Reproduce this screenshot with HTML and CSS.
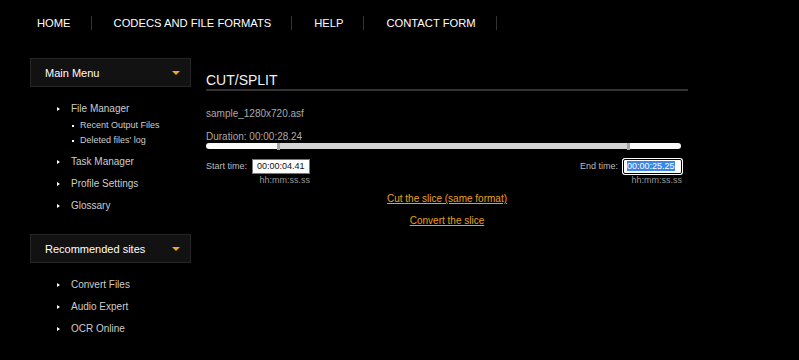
FILE: index.html
```html
<!DOCTYPE html>
<html lang="en">
<head>
    <meta charset="UTF-8">
    <meta name="viewport" content="width=device-width, initial-scale=1.0">
    <title>Cut/Split</title>
    <link rel="stylesheet" href="styles.css">
</head>
<body>
    <nav class="topnav">
        <ul>
            <li><a href="#">HOME</a></li>
            <li><a href="#">CODECS AND FILE FORMATS</a></li>
            <li><a href="#">HELP</a></li>
            <li><a href="#">CONTACT FORM</a></li>
        </ul>
    </nav>

    <div class="page">
        <aside class="sidebar">
            <div class="panel">
                <span>Main Menu</span>
                <span class="caret"></span>
            </div>
            <ul class="menu">
                <li>
                    <a class="item" href="#">File Manager</a>
                    <ul class="sub">
                        <li><a href="#">Recent Output Files</a></li>
                        <li><a href="#">Deleted files' log</a></li>
                    </ul>
                </li>
                <li><a class="item" href="#">Task Manager</a></li>
                <li><a class="item" href="#">Profile Settings</a></li>
                <li><a class="item" href="#">Glossary</a></li>
            </ul>

            <div class="panel">
                <span>Recommended sites</span>
                <span class="caret"></span>
            </div>
            <ul class="menu">
                <li><a class="item" href="#">Convert Files</a></li>
                <li><a class="item" href="#">Audio Expert</a></li>
                <li><a class="item" href="#">OCR Online</a></li>
            </ul>
        </aside>

        <main class="main">
            <h1>CUT/SPLIT</h1>
            <div class="filename">sample_1280x720.asf</div>
            <div class="duration">Duration: 00:00:28.24</div>

            <div class="slider">
                <div class="seg out" style="width: 71px"></div>
                <div class="handle"></div>
                <div class="seg in"></div>
                <div class="handle"></div>
                <div class="seg out" style="width: 51px"></div>
            </div>

            <div class="times">
                <div class="time-group">
                    <label>Start time:</label>
                    <div class="time-field">
                        <div class="time-box">00:00:04.41</div>
                        <div class="hint">hh:mm:ss.ss</div>
                    </div>
                </div>
                <div class="time-group">
                    <label>End time:</label>
                    <div class="time-field">
                        <div class="time-box focus"><span class="sel">00:00:25.25</span></div>
                        <div class="hint">hh:mm:ss.ss</div>
                    </div>
                </div>
            </div>

            <div class="actions">
                <a href="#">Cut the slice (same format)</a>
                <a href="#">Convert the slice</a>
            </div>
        </main>
    </div>
</body>
</html>
```

FILE: styles.css
```css
body {
    margin: 0;
    padding: 0;
    background-color: #000;
    font-family: "Liberation Sans", Arial, sans-serif;
    color: #ccc;
}

a {
    color: inherit;
    text-decoration: none;
}

ul {
    list-style: none;
    margin: 0;
    padding: 0;
}

/* top navigation */
.topnav {
    height: 45px;
}

.topnav ul {
    display: flex;
    height: 100%;
    padding-left: 15px;
}

.topnav li {
    display: flex;
    align-items: center;
}

.topnav a {
    color: #fff;
    font-size: 11.2px;
    padding: 0 20px 0 22px;
}

.topnav li::after {
    content: "";
    width: 1px;
    height: 14px;
    background-color: #333;
}

.page {
    display: flex;
    padding: 13px 0 0 30px;
}

/* sidebar */
.sidebar {
    width: 161px;
}

.panel {
    display: flex;
    align-items: center;
    justify-content: space-between;
    box-sizing: border-box;
    height: 29px;
    padding: 1px 10px 0 14px;
    background-color: #121212;
    border: 1px solid #262626;
    color: #fff;
    font-size: 11px;
}

.caret {
    width: 0;
    height: 0;
    border-left: 4px solid transparent;
    border-right: 4px solid transparent;
    border-top: 4px solid #f0a818;
}

.menu {
    margin: 11px 0 17px;
    padding-left: 27px;
    font-size: 10px;
}

.menu li {
    line-height: 22px;
}

.item {
    display: flex;
    align-items: center;
}

.item::before {
    content: "";
    width: 0;
    height: 0;
    margin-right: 11px;
    border-left: 3px solid #fff;
    border-top: 2.5px solid transparent;
    border-bottom: 2.5px solid transparent;
}

.sub {
    margin: -2px 0 3px;
    padding-left: 15px;
    font-size: 9px;
}

.sub li {
    display: flex;
    align-items: center;
    line-height: 15px;
}

.sub li::before {
    content: "";
    width: 2px;
    height: 2px;
    margin-right: 6px;
    background-color: #fff;
}

/* main content */
.main {
    width: 482px;
    margin-left: 15px;
    padding-top: 14px;
}

h1 {
    margin: 0;
    font-size: 14px;
    font-weight: normal;
    line-height: 17px;
    color: #f2f2f2;
    border-bottom: 2px solid #333;
}

.filename {
    margin-top: 16px;
    font-size: 10px;
    line-height: 14px;
    color: #aaa;
}

.duration {
    margin-top: 10px;
    font-size: 10px;
    line-height: 12px;
    color: #aaa;
}

.slider {
    display: flex;
    align-items: center;
    width: 475px;
    height: 6px;
    margin-top: 0;
}

.seg {
    height: 6px;
}

.seg.out {
    background-color: #fafafa;
}

.seg.out:first-child {
    border-radius: 3px 0 0 3px;
}

.seg.out:last-child {
    border-radius: 0 3px 3px 0;
}

.seg.in {
    flex: 1;
    background-color: #d4d4d4;
}

.handle {
    width: 3px;
    height: 7px;
    background-color: #a8a8a8;
}

.times {
    display: flex;
    justify-content: space-between;
    width: 476px;
    margin-top: 10px;
    font-size: 9px;
}

.time-group {
    display: flex;
    align-items: flex-start;
    gap: 5px;
}

.time-group label {
    line-height: 15px;
    color: #bbb;
}

.time-field {
    display: flex;
    flex-direction: column;
    align-items: flex-end;
}

.time-box {
    box-sizing: border-box;
    width: 58px;
    height: 15px;
    padding-left: 4px;
    line-height: 13px;
    background-color: #fff;
    border: 1px solid #777;
    color: #111;
}

.time-box.focus {
    width: 59px;
    padding-left: 3px;
    border: 1px solid #000;
    border-radius: 2px;
    box-shadow: 0 0 0 1px #fff;
}

.sel {
    background-color: #3d85e6;
    color: #fff;
}

.hint {
    margin-top: 0;
    line-height: 12px;
    color: #999;
}

.actions {
    display: flex;
    flex-direction: column;
    align-items: center;
    gap: 8px;
    margin-top: 6px;
    font-size: 10px;
    line-height: 14px;
}

.actions a {
    color: #e8a11c;
    text-decoration: underline;
}
```
